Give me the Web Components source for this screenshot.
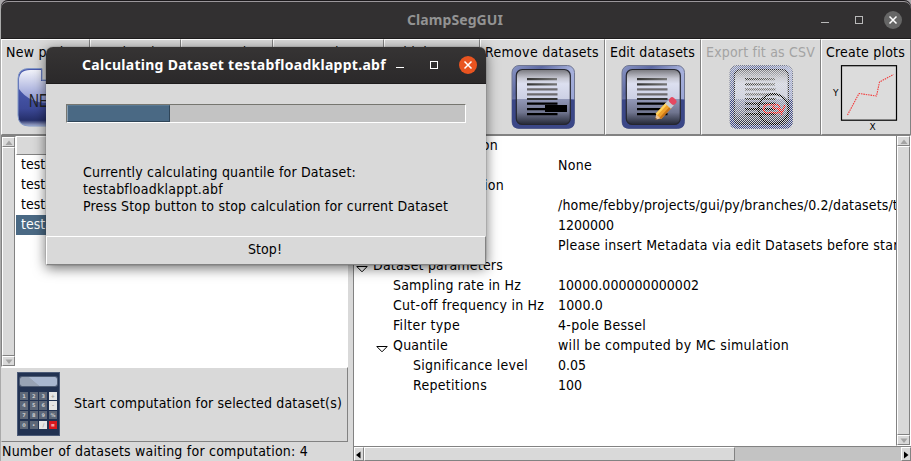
<!DOCTYPE html>
<html lang="en"><head><meta charset="utf-8"><title>ClampSegGUI</title>
<style>
html,body{margin:0;height:100%;overflow:hidden}
body{font:14px/17px "DejaVu Sans Condensed","DejaVu Sans",sans-serif;color:#000;background:#d9d9d9}
</style></head><body><clamp-app></clamp-app>
<script>
const define=(name,html,init)=>customElements.define(name,class extends HTMLElement{
  constructor(){super();const t=document.createElement('template');t.innerHTML=html;
    this.attachShadow({mode:'open'}).append(t.content.cloneNode(true));}
  connectedCallback(){if(init)init(this,this.shadowRoot);}
});

/* A label that spreads its letters over the width given in "w". */
define('tk-label','<style>:host{display:inline-block;white-space:pre}span{display:inline-block}</style><span><slot></slot></span>',
(el,r)=>{const w=+el.getAttribute('w');if(!w)return;
  const s=r.querySelector('span');
  s.style.letterSpacing=((w-s.getBoundingClientRect().width)/el.textContent.length)+'px';});

define('tool-button',`<style>
:host{box-sizing:border-box;display:flex;flex-direction:column;align-items:center;height:96px;padding:4px 1px 0 0;
background:#d9d9d9;border:1px solid;border-color:#fff #828282 #828282 #fff;overflow:hidden;white-space:nowrap}
:host([disabled]){color:#a3a3a3}
.i{display:block;margin-top:4px;height:65px}</style><slot name="label"></slot><div class="i"><slot></slot></div>`);

let uid=0;
const sheet=extra=>{const k='g'+(uid++);return `<svg width="64" height="64" viewBox="0 0 64 64" style="display:block"><defs>
<linearGradient id="${k}a" x1="0" y1="0" x2="1" y2="1"><stop offset="0" stop-color="#8c97c6"/><stop offset=".25" stop-color="#5d69a2"/><stop offset=".5" stop-color="#a7b1dc"/><stop offset="1" stop-color="#8f9bd0"/></linearGradient>
<linearGradient id="${k}b" x1="0" y1="0" x2="0" y2="1"><stop offset="0" stop-color="#77777d"/><stop offset=".16" stop-color="#c6c7d2"/><stop offset=".26" stop-color="#dcdff0"/><stop offset=".53" stop-color="#ccd0e4"/><stop offset=".54" stop-color="#9298b8"/><stop offset=".78" stop-color="#70758f"/><stop offset="1" stop-color="#242836"/></linearGradient>
<linearGradient id="${k}c" x1="0" y1="0" x2="1" y2="0"><stop offset="0" stop-color="#333"/><stop offset="1" stop-color="#777"/></linearGradient></defs>
<rect x="1" y=".5" width="62.500" height="63" rx="7" fill="url(#${k}a)" stroke="#717790"/>
<path d="M1 34.5Q32 31.5 63.500 34.500V57q0 6.500-6.500 6.500h-49.500Q1 63.5 1 57z" fill="#3b4787"/>
<rect x="5.300" y="4.500" width="54" height="55" rx="6" fill="url(#${k}b)" stroke="#25262e" stroke-width="1.2"/>
<g fill="url(#${k}c)"><path d="M16 13h30v2.300h-30zM16 18.300h30v2.300h-30z"/></g>
<path d="M16 23.300h30.500v2.300h-30.500zM16 28.300h30.500v2.300h-30.500z" fill="#6d6b6e"/><path d="M16 33h30.500v2h-30.500z" fill="#333"/>
<path d="M16 37.500h30.500v2.300h-30.500zM16 43h30.500v2.300h-30.500zM16 48h30.500v2.300h-30.500z"/>${extra}</svg>`};

define('remove-icon','<style>:host{display:block;position:relative;left:.5px}</style>'+sheet('<path d="M34 40H56V47H34z"/>'));
define('edit-icon',sheet(`<g transform="translate(34 55) rotate(-47)"><path d="M0 0L6-3.500V3.500z" fill="#efc28d"/><path d="M0 0l2-1.200v2.400z" fill="#4b3428"/>
<rect x="5" y="-3.800" width="15" height="7.600" fill="#f0a12b"/><rect x="5" y="-3.800" width="15" height="2.300" fill="#ffd35c"/><rect x="5" y="1.700" width="15" height="2.100" fill="#c87318"/>
<rect x="19" y="-3.800" width="4.500" height="7.600" fill="#c8ccd2"/><rect x="23" y="-3.900" width="6" height="7.800" rx="2.800" fill="#e54860"/></g>`));
define('csv-icon',sheet(`<circle cx="44.500" cy="44" r="15" fill="none" stroke="#000" stroke-width="2"/>
<g fill="none" stroke="#f00" stroke-width="1.700"><path d="M43 40q-8-2-8.500 4q.5 6 8.500 3"/><path d="M50 40q-6-1.500-6 1.500q0 2 3 2q3.500 0 3.500 2.500q0 3-7 1.500"/><path d="M49.500 40l3 8.500l3.500-8.500"/></g>
<defs><pattern id="dots" width="2" height="2" patternUnits="userSpaceOnUse"><path d="M0 0h1v1H0zM1 1h1v1H1z" fill="#d9d9d9" shape-rendering="crispEdges"/></pattern></defs>
<rect width="64" height="64" fill="url(#dots)"/>`));
define('new-icon',`<svg width="64" height="64" viewBox="0 0 64 64" style="display:block"><defs><linearGradient id="a" x1="0" y1="0" x2="0" y2="1"><stop offset="0" stop-color="#f2f3fa"/><stop offset="1" stop-color="#8791d0"/></linearGradient>
<linearGradient id="b" x1="0" y1="0" x2="0" y2="1"><stop offset=".3" stop-color="#4a5aae"/><stop offset=".7" stop-color="#3c4997"/><stop offset=".9" stop-color="#252f6a"/><stop offset="1" stop-color="#a9b2d2"/></linearGradient></defs>
<path d="M25 3.500H12Q1 3.500 1 14V50Q1 61 12 61H63V15H25z" fill="url(#b)" stroke="#8399c8" stroke-width="1"/>
<path d="M24 5H13Q2 5 2 15V24Q12 38 32 38V16H24z" fill="url(#a)"/></svg>
<style>:host{display:block;position:relative;left:3.500px}b{position:absolute;left:12px;top:27px;font:18px/18px "Liberation Sans",sans-serif;color:#222;transform:scaleX(.76);transform-origin:0 0}</style><b>NEW</b>`);
define('plot-icon',`<style>:host{display:block}svg{display:block}text{font:9px "DejaVu Sans",sans-serif}</style>
<svg width="78" height="66" viewBox="0 0 78 66"><rect x="14.500" y=".700" width="55" height="54.500" fill="#dcdcdc" stroke="#000" stroke-width="1.200"/>
<path d="M20.500 50L32 28.500L49.500 31L52.500 17L66.500 9.500" fill="none" stroke="#f23b3b" stroke-width="1.100" stroke-dasharray="1.500 .9"/>
<text x="6" y="31">Y</text><text x="42.500" y="64.500">X</text></svg>`);

define('window-buttons',`<style>:host{display:flex;color:#b9b9b9}svg{display:block}</style>
<svg width="84" height="20" viewBox="0 0 84 20" fill="none" stroke="currentColor"><path d="M3 12.500h8"/><rect x="37.500" y="6.500" width="7" height="7"/><circle cx="75" cy="10" r="9" style="fill:var(--close,#666);stroke:none"/><path d="M71.500 6.500l7 7m0-7l-7 7" stroke="#fff" stroke-width="1.500"/></svg>`);

define('title-bar',`<style>:host{display:flex;align-items:center;box-sizing:border-box;height:38px;background:#323031;border-bottom:1px solid #1e1c1d;
font:bold 14px/20px "Noto Sans","Open Sans",sans-serif;color:#939393}
.t{flex:1;display:flex;justify-content:var(--just,center)}</style><div class="t"><slot></slot></div><slot name="buttons"></slot>`);

const arrows={up:'M5 2.500L8.500 7h-7z',down:'M5 7L1.500 2.500h7z',left:'M2 5L6.500 1.500v7z',right:'M7.500 5L3 1.500v7z'};
define('scroll-arrow',`<style>:host{display:flex;align-items:center;justify-content:center;box-sizing:border-box;flex:none;border:1px solid;border-color:#fff #828282 #828282 #fff;background:#d9d9d9;color:#a3a3a3;overflow:hidden}
:host([live]){color:#000}svg{flex:none}</style><svg width="10" height="9" viewBox="0 0 10 9"><path fill="currentColor"/></svg>`,
(el,r)=>r.querySelector('path').setAttribute('d',arrows[el.getAttribute('dir')]));
define('scroll-v',`<style>:host{display:flex;flex-direction:column;box-sizing:border-box;width:15px;border:1px solid;border-color:#828282 #fff #fff #828282;background:#c3c3c3}
scroll-arrow{height:10px}i{flex:1;border:1px solid;border-color:#fff #828282 #828282 #fff;background:#d9d9d9}</style>
<scroll-arrow dir="up"></scroll-arrow><i></i><scroll-arrow dir="down"></scroll-arrow>`);
define('scroll-h',`<style>:host{display:flex;box-sizing:border-box;height:15px;border-top:1px solid #828282;background:#c3c3c3}
scroll-arrow{width:10px}i{width:371px;box-sizing:border-box;border:1px solid;border-color:#fff #828282 #828282 #fff;background:#d9d9d9}u{flex:1}</style>
<scroll-arrow live dir="left"></scroll-arrow><i></i><u></u><scroll-arrow live dir="right"></scroll-arrow>`);

define('list-row',`<style>:host{display:block;height:20px;line-height:19px;padding-left:5px}:host([selected]){background:#4a6984;color:#fff}</style><slot></slot>`);

define('tree-row',`<style>:host{display:grid;grid-template-columns:204px 1fr;height:20px;line-height:18px;white-space:nowrap}
.k{display:flex;padding-left:19px}:host([level="1"]) .k{padding-left:39px}:host([level="2"]) .k{padding-left:59px}
svg{display:none;margin:9px 5px 0 -17px;width:12px;height:8px}:host([open]) svg{display:block}</style>
<div class="k"><svg viewBox="0 0 12 8"><path d="M.8 1.500H11.200L6 6.800z" fill="#fff" stroke="#000"/></svg><slot></slot></div><div><slot name="value"></slot></div>`);

const keys=['1','2','3','+','4','5','6','-','7','8','9','%','0','•','/','='];
define('calc-icon',`<style>:host{box-sizing:border-box;display:flex;flex-direction:column;width:43px;height:64px;padding:4px 2px;background:#223252;gap:6px;border:1px solid #4c5b78}
.s{height:9px;border-radius:2px;background:linear-gradient(40deg,#98a3b5 40%,#a9b7d0 42%);box-shadow:0 0 0 1px #4d5b73}
.g{display:grid;grid-template-columns:repeat(4,1fr);gap:1.500px}.g b{height:8.300px;background:#5d6778;color:#ccc;font:bold 5px/8px "DejaVu Sans",sans-serif;text-align:center}
.g .w{background:#e5e5e5;color:#999}.g .r{background:#d9181f;color:#fff}</style><div class="s"></div><div class="g">${keys.map((k,i)=>`<b class="${[3,7,14].includes(i)?'w':i==15?'r':''}">${k}</b>`).join('')}</div>`);

define('progress-bar',`<style>:host{display:block;box-sizing:border-box;width:400px;height:19px;border:1px solid;border-color:#767670 #fff #fff #767670;background:#c3c3c3}
i{display:block;box-sizing:border-box;width:103px;height:17px;background:#4a6984;border:1px solid;border-color:#5a7a94 #2f4558 #2f4558 #8ba0b2}</style><i></i>`);

define('calc-dialog',`<style>:host{display:flex;flex-direction:column;width:440px;height:218px;background:#d9d9d9;border-radius:7px 7px 0 0;box-shadow:0 3px 13px rgba(0,0,0,.58),0 0 1px #333}
title-bar{height:37px;border-radius:7px 7px 0 0;color:#fff;--just:flex-start;padding-left:36px;padding-right:9px;background:linear-gradient(#363434,#2b292a)}
window-buttons{color:#fff;--close:#e95420}
.b{flex:1;padding:20px 20px 0}
.m{display:flex;flex-direction:column;padding:41px 17px 0}
.s{box-sizing:border-box;height:29px;border:1px solid;border-color:#fff #828282 #828282 #fff;text-align:center;line-height:25px;padding-right:2px}</style>
<title-bar><tk-label w="304">Calculating Dataset testabfloadklappt.abf</tk-label><window-buttons slot="buttons"></window-buttons></title-bar>
<div class="b"><progress-bar></progress-bar><div class="m"><tk-label w="273">Currently calculating quantile for Dataset:</tk-label><tk-label w="140">testabfloadklappt.abf</tk-label><tk-label w="365">Press Stop button to stop calculation for current Dataset</tk-label></div></div>
<div class="s"><tk-label w="34">Stop!</tk-label></div>`);

const row=(l,k,w,v,vw,open)=>`<tree-row level="${l}"${open?' open':''}><tk-label w="${w}">${k}</tk-label>${v?`<tk-label slot="value" w="${vw}">${v}</tk-label>`:''}</tree-row>`;
define('clamp-app',`<style>
:host{display:flex;flex-direction:column;box-sizing:border-box;width:911px;height:461px;position:relative;overflow:hidden;background:#d9d9d9;border-left:1px solid #aaa}
.top{height:39px;background:#aaa6aa}
.top title-bar{height:39px;border-radius:7px 7px 0 0;padding:2px 9px 0 91px;box-shadow:inset 0 1px #1c191c,inset 0 2px #9b979b}
.tools{display:grid;grid-template-columns:89px 91px 92px 111px 96px 125px 96px 120px 90px;height:96px}
.main{display:grid;grid-template-columns:347px 4px 559px;height:326px}
.left{display:flex;flex-direction:column}
.list{display:grid;grid-template-columns:15px 1fr;height:232px;border-top:1px solid #828282;box-sizing:border-box}
.rows{background:#fff}.head{height:19px;box-sizing:border-box;background:#d9d9d9;border:1px solid;border-color:#fff #828282 #828282 #fff}
.start{display:flex;box-sizing:border-box;height:75px;border:1px solid;border-color:#fff #828282 #828282 #d9d9d9;align-items:center;padding:0 0 2px 15px;gap:14px}
.right{display:grid;grid-template-columns:542px 15px;grid-template-rows:311px 15px;border-left:1px solid #828282;box-sizing:border-box;margin-left:1px}
.tree{background:#fff;overflow:hidden;border-top:1px solid #828282;box-sizing:border-box}
scroll-h{grid-column:1/3}
calc-dialog{position:absolute;left:45px;top:47px}
</style>
<div class="top"><title-bar><tk-label w="96">ClampSegGUI</tk-label><window-buttons slot="buttons"></window-buttons></title-bar></div>
<div class="tools">
<tool-button><tk-label slot="label" w="78">New project</tk-label><new-icon></new-icon></tool-button>
<tool-button><tk-label slot="label" w="79">Load project</tk-label></tool-button>
<tool-button><tk-label slot="label" w="79">Save project</tk-label></tool-button>
<tool-button><tk-label slot="label" w="98">Save project as</tk-label></tool-button>
<tool-button><tk-label slot="label" w="82">Add datasets</tk-label></tool-button>
<tool-button><tk-label slot="label" w="114">Remove datasets</tk-label><remove-icon></remove-icon></tool-button>
<tool-button><tk-label slot="label" w="85">Edit datasets</tk-label><edit-icon></edit-icon></tool-button>
<tool-button disabled><tk-label slot="label" w="109">Export fit as CSV</tk-label><csv-icon></csv-icon></tool-button>
<tool-button><tk-label slot="label" w="79">Create plots</tk-label><plot-icon></plot-icon></tool-button></div>
<div class="main"><div class="left"><div class="list"><scroll-v></scroll-v><div class="rows"><div class="head"></div>
<list-row>testabf1.abf</list-row><list-row>testabf2.abf</list-row><list-row>testabf3.abf</list-row><list-row selected>testabfloadklappt.abf</list-row></div></div>
<div class="start"><calc-icon></calc-icon><tk-label w="268">Start computation for selected dataset(s)</tk-label></div>
<tk-label style="padding-left:1px;margin-top:1px" w="306">Number of datasets waiting for computation: 4</tk-label></div><div></div>
<div class="right"><div class="tree">
${row(0,'Project information',125,'',0,1)}${row(1,'Project name',80,'None',34)}${row(0,'Dataset information',131,'',0,1)}${row(1,'File',22,'/home/febby/projects/gui/py/branches/0.2/datasets/testabfloadklappt.abf',473)}${row(1,'Datapoints',66,'1200000',56)}${row(1,'Metadata',58,'Please insert Metadata via edit Datasets before starting',366)}${row(0,'Dataset parameters',130,'',0,1)}${row(1,'Sampling rate in Hz',128,'10000.000000000002',141)}${row(1,'Cut-off frequency in Hz',151,'1000.0',45)}${row(1,'Filter type',67,'4-pole Bessel',88)}${row(1,'Quantile',55,'will be computed by MC simulation',231,1)}${row(2,'Significance level',115,'0.05',28)}${row(2,'Repetitions',74,'100',24)}
</div><scroll-v></scroll-v><scroll-h></scroll-h></div></div><calc-dialog></calc-dialog>`);
</script></body></html>
